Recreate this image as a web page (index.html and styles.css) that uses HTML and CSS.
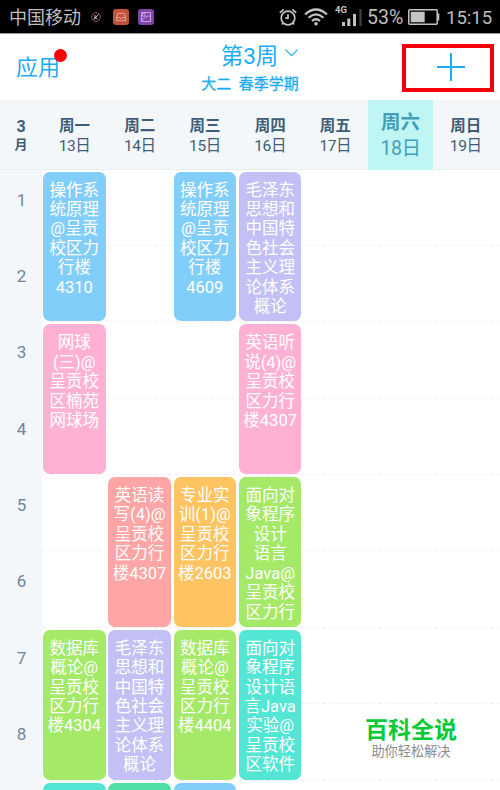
FILE: index.html
```html
<!DOCTYPE html>
<html lang="zh-CN">
<head>
<meta charset="utf-8">
<title>课程表</title>
<link rel="stylesheet" href="styles.css">
</head>
<body>
<div class="phone">
  <div class="status">
    <span class="carrier">中国移动</span>
    <svg class="mute" width="10" height="10" viewBox="0 0 10 10" fill="none"><circle cx="5" cy="5" r="4.3" stroke="#a35c5e" stroke-width=".9"/><path d="M2.5 7.5l5-5M4 3v4M4 5l2.5 2" stroke="#ddd" stroke-width=".9"/></svg>
    <svg class="inbox" width="16" height="16" viewBox="0 0 16 16" fill="none" stroke="#e2a596"><rect width="16" height="16" rx="3" fill="#c1523c" stroke="none"/><path d="M3.5 8.5l1.2-4.2h6.6l1.2 4.2v3.2h-9zM3.5 8.5H6q2 2.2 4 0h2.5"/></svg>
    <svg class="gallery" width="16" height="16" viewBox="0 0 16 16" fill="none" stroke="#c5a3dd"><rect width="16" height="16" rx="3" fill="#8045a8" stroke="none"/><path d="M3.5 3.5h9v9h-9zM4 12q2-5 8-5"/><circle cx="5.8" cy="5.8" r="1.5"/></svg>
    <span class="spacer"></span>
    <svg class="alarm" width="18" height="18" viewBox="0 0 18 18" fill="none" stroke="#c4c4c4" stroke-width="1.7"><circle cx="9" cy="10" r="6.8"/><path d="M.8 4.8L4.6 1.4M13.4 1.4l3.8 3.4M9 6.2v4l-2.8 0M4.5 14.5L3 16.5M13.5 14.5l1.5 2"/></svg>
    <svg class="wifi" width="24" height="18" viewBox="0 0 24 18" fill="none" stroke="#c4c4c4" stroke-width="2.2"><path d="M1 6.5Q12-3.5 23 6.5M4.5 9.8Q12 3 19.5 9.8M8 13Q12 9.5 16 13"/><circle cx="12" cy="15.8" r="1.8" fill="#c4c4c4" stroke="none"/></svg>
    <svg class="signal" width="28" height="22" viewBox="0 0 28 22"><text class="net" x="0" y="8">4G</text><path d="M7 17h3v4H7zM12.3 13.5h3V21h-3zM18 9h3v12h-3z" fill="#c4c4c4"/><path d="M24.3 4h2.4v17h-2.4z" fill="#3d3d3d"/></svg>
    <span class="percent">53%</span>
    <svg class="battery" width="32" height="16" viewBox="0 0 32 16"><rect x=".8" y=".8" width="28.4" height="14.4" rx="1" fill="none" stroke="#c4c4c4" stroke-width="1.5"/><path d="M2.7 2.8h14v10.5h-14zM29.5 4.5h1.8v7h-1.8z" fill="#c4c4c4"/></svg>
    <span class="clock">15:15</span>
  </div>

  <div class="topbar">
    <div class="apps">应用<i class="dot"></i></div>
    <div class="term">
      <div class="week">第3周<svg width="13" height="8" viewBox="0 0 13 8" fill="none" stroke="#1badf0" stroke-width="1.2"><path d="M.5.7l6 6 6-6"/></svg></div>
      <div class="season">大二&nbsp; 春季学期</div>
    </div>
    <div class="add"><svg width="28" height="28" viewBox="0 0 28 28" stroke="#1badf0" stroke-width="2"><path d="M14 0v28M0 14h28"/></svg></div>
  </div>

  <div class="days">
    <div class="month"><b>3</b><b class="unit">月</b></div>
    <div class="day"><b>周一</b><span>13日</span></div>
    <div class="day"><b>周二</b><span>14日</span></div>
    <div class="day"><b>周三</b><span>15日</span></div>
    <div class="day"><b>周四</b><span>16日</span></div>
    <div class="day"><b>周五</b><span>17日</span></div>
    <div class="day today"><b>周六</b><span>18日</span></div>
    <div class="day"><b>周日</b><span>19日</span></div>
  </div>

  <div class="table">
    <div class="hours"><span>1</span><span>2</span><span>3</span><span>4</span><span>5</span><span>6</span><span>7</span><span>8</span><span></span></div>
    <div class="grid">
      <div class="line r1"></div><div class="line r2"></div><div class="line r3"></div><div class="line r4"></div><div class="line r5"></div><div class="line r6"></div><div class="line r7"></div><div class="line r8"></div>
      <div class="course c1 p1 blue">操作系<br>统原理<br>@呈贡<br>校区力<br>行楼<br>4310</div>
      <div class="course c3 p1 blue">操作系<br>统原理<br>@呈贡<br>校区力<br>行楼<br>4609</div>
      <div class="course c4 p1 violet">毛泽东<br>思想和<br>中国特<br>色社会<br>主义理<br>论体系<br>概论</div>
      <div class="course c1 p2 pink">网球<br>(三)@<br>呈贡校<br>区楠苑<br>网球场</div>
      <div class="course c4 p2 pink">英语听<br>说(4)@<br>呈贡校<br>区力行<br>楼4307</div>
      <div class="course c2 p3 red">英语读<br>写(4)@<br>呈贡校<br>区力行<br>楼4307</div>
      <div class="course c3 p3 orange">专业实<br>训(1)@<br>呈贡校<br>区力行<br>楼2603</div>
      <div class="course c4 p3 green">面向对<br>象程序<br>设计<br>语言<br>Java@<br>呈贡校<br>区力行</div>
      <div class="course c1 p4 green">数据库<br>概论@<br>呈贡校<br>区力行<br>楼4304</div>
      <div class="course c2 p4 violet">毛泽东<br>思想和<br>中国特<br>色社会<br>主义理<br>论体系<br>概论</div>
      <div class="course c3 p4 green">数据库<br>概论@<br>呈贡校<br>区力行<br>楼4404</div>
      <div class="course c4 p4 teal">面向对<br>象程序<br>设计语<br>言Java<br>实验@<br>呈贡校<br>区软件</div>
      <div class="course c1 p5 teal"></div>
      <div class="course c2 p5 mint"></div>
      <div class="course c3 p5 blue"></div>
    </div>
  </div>
  <div class="brand"><b>百科全说</b><span>助你轻松解决</span></div>
</div>
</body>
</html>
```
FILE: styles.css
```css
* { box-sizing: border-box; }
body { margin: 0; font-family: Roboto, "Noto Sans CJK SC", sans-serif; background: #fff; }
.phone { position: relative; width: 500px; height: 790px; overflow: hidden; display: flex; flex-direction: column; }

.status { flex: none; display: flex; align-items: center; height: 33px; padding: 0 8px 0 9px; background: #000; color: #bdbdbd; white-space: nowrap; }
.status svg { flex: none; }
.carrier { width: 72px; margin-top: 2px; font-size: 18px; line-height: 33px; }
.mute { margin-left: 10px; }
.inbox { margin-left: 12px; }
.gallery { margin-left: 9px; }
.spacer { flex: 1; }
.wifi { margin-left: 7px; }
.signal { margin: -1px 0 0 7px; }
.net { font: bold 9.5px Roboto, sans-serif; fill: #c4c4c4; }
.percent { margin: 2px 0 0 4px; width: 37px; font-size: 19.5px; }
.battery { margin-left: 4px; }
.clock { margin: 2px 0 0 6px; width: 46px; font-size: 18.5px; }

.topbar { flex: none; display: grid; grid-template-columns: 125px 250px 125px; height: 67px; border-top: 1px solid #999; color: #1badf0; }
.apps { position: relative; padding: 18px 0 0 16px; font-size: 22px; line-height: 31px; }
.dot { position: absolute; left: 54px; top: 15px; width: 13px; height: 13px; border-radius: 50%; background: #f00; }
.term { text-align: center; }
.week { display: flex; align-items: center; justify-content: center; gap: 7px; height: 31px; margin-top: 4px; padding-left: 19px; font-size: 22.5px; }
.week svg { margin-bottom: 2px; }
.season { font-size: 15px; line-height: 22px; margin-top: 4px; -webkit-text-stroke: 0.3px #1badf0; }
.add { display: flex; align-items: center; justify-content: center; width: 92px; height: 48px; margin: 10px 0 0 27px; padding: 0 0 2px 5px; border: 4px solid #f5000b; }

.days { flex: none; display: grid; grid-template-columns: 42px repeat(7, 65.2px); height: 69.5px; background: #f3f7f9; border-bottom: 1px solid #e6eef0; color: #3f5d78; text-align: center; }
.month { display: flex; flex-direction: column; padding-top: 18px; font-size: 16px; line-height: 18px; }
.month .unit { font-size: 13px; }
.day { display: flex; flex-direction: column; padding-top: 16px; font-size: 15.5px; line-height: 20px; }
.day span { letter-spacing: -0.4px; }
.day b { font-weight: 700; }
.today { height: 69.5px; padding-top: 10px; background: #bff6f3; color: #439eb9; font-size: 19.5px; line-height: 26px; }

.table { flex: 1; display: grid; grid-template-columns: 42px 1fr; min-height: 0; }
.hours { display: grid; grid-template-rows: repeat(9, 76.4px); background: #f3f7f9; color: #71869a; font-size: 17px; line-height: 20px; text-align: center; overflow: hidden; }
.hours span { padding: 20px 0 0 1px; }
.grid { display: grid; grid-template-columns: repeat(7, 65.3px); grid-template-rows: repeat(10, 76.4px); height: 621px; overflow: hidden; }
.line { grid-column: 1 / -1; align-self: end; height: 1px; background: repeating-linear-gradient(90deg, #f0f0f0 0 4px, transparent 4px 7px); }
.r1 { grid-row: 1; } .r2 { grid-row: 2; } .r3 { grid-row: 3; } .r4 { grid-row: 4; }
.r5 { grid-row: 5; } .r6 { grid-row: 6; } .r7 { grid-row: 7; } .r8 { grid-row: 8; }
.course { margin: 2px 1.8px 0.8px 1px; padding-top: 9px; border-radius: 7px; color: #fff; font-size: 16.5px; line-height: 19.4px; text-align: center; white-space: nowrap; }
.c1 { grid-column: 1; } .c2 { grid-column: 2; } .c3 { grid-column: 3; } .c4 { grid-column: 4; }
.p1 { grid-row: 1 / 3; } .p2 { grid-row: 3 / 5; } .p3 { grid-row: 5 / 7; } .p4 { grid-row: 7 / 9; } .p5 { grid-row: 9 / 11; }
.blue { background: #82cefa; }
.violet { background: #c2c0f5; }
.pink { background: #ffb1d5; }
.red { background: #ffa5a5; }
.orange { background: #ffc362; }
.green { background: #a4e967; }
.teal { background: #54e6d4; }
.mint { background: #51dda6; }

.brand { position: absolute; left: 361px; top: 716px; width: 100px; display: flex; flex-direction: column; align-items: center; white-space: nowrap; }
.brand b { font-size: 23px; line-height: 29px; color: #06cb35; }
.brand span { font-size: 13.2px; line-height: 14px; color: #8c8c8c; }
```
